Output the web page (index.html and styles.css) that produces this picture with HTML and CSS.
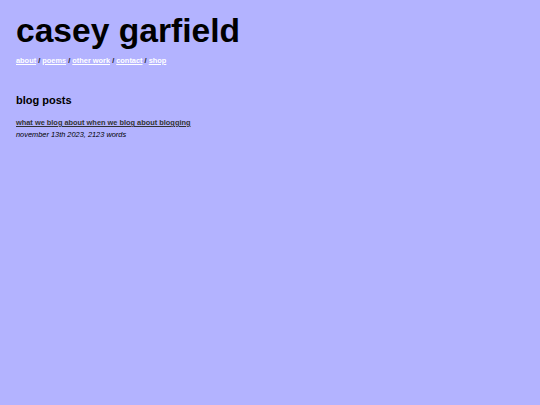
FILE: index.html
```html
<!DOCTYPE html>
<html>
<head>
<meta charset="utf-8">
<link rel="stylesheet" href="styles.css">
</head>
<body>
<header class="site-header">
  <h1 class="site-title">casey garfield</h1>
  <nav class="site-nav">
    <a href="#">about</a> / <a href="#">poems</a> / <a href="#">other work</a> / <a href="#">contact</a> / <a href="#">shop</a>
  </nav>
</header>
<main class="content">
  <h2 class="section-title">blog posts</h2>
  <div class="post">
    <a class="post-link" href="#">what we blog about when we blog about blogging</a>
    <div class="post-meta">november 13th 2023, 2123 words</div>
  </div>
</main>
</body>
</html>
```
FILE: styles.css
```css
html, body {
  margin: 0;
  padding: 0;
  background: #b3b3ff;
}
body {
  font-family: "Liberation Sans", Arial, sans-serif;
  color: #000;
  padding: 11px 16px;
}
.site-title {
  font-size: 33.6px;
  font-weight: bold;
  margin: 0;
  line-height: 40px;
}
.site-nav {
  font-size: 7.4px;
  line-height: 10px;
  font-weight: bold;
  color: #222;
  margin-top: 5px;
}
.site-nav a {
  color: #fff;
}
.content {
  margin-top: 28px;
}
.section-title {
  font-size: 11px;
  line-height: 13px;
  font-weight: bold;
  margin: 0 0 11px 0;
}
.post-link {
  display: block;
  width: max-content;
  font-size: 7.4px;
  line-height: 10px;
  font-weight: bold;
  color: #333;
}
.post-meta {
  font-size: 7.4px;
  line-height: 10px;
  font-style: italic;
  margin-top: 2px;
}
```
